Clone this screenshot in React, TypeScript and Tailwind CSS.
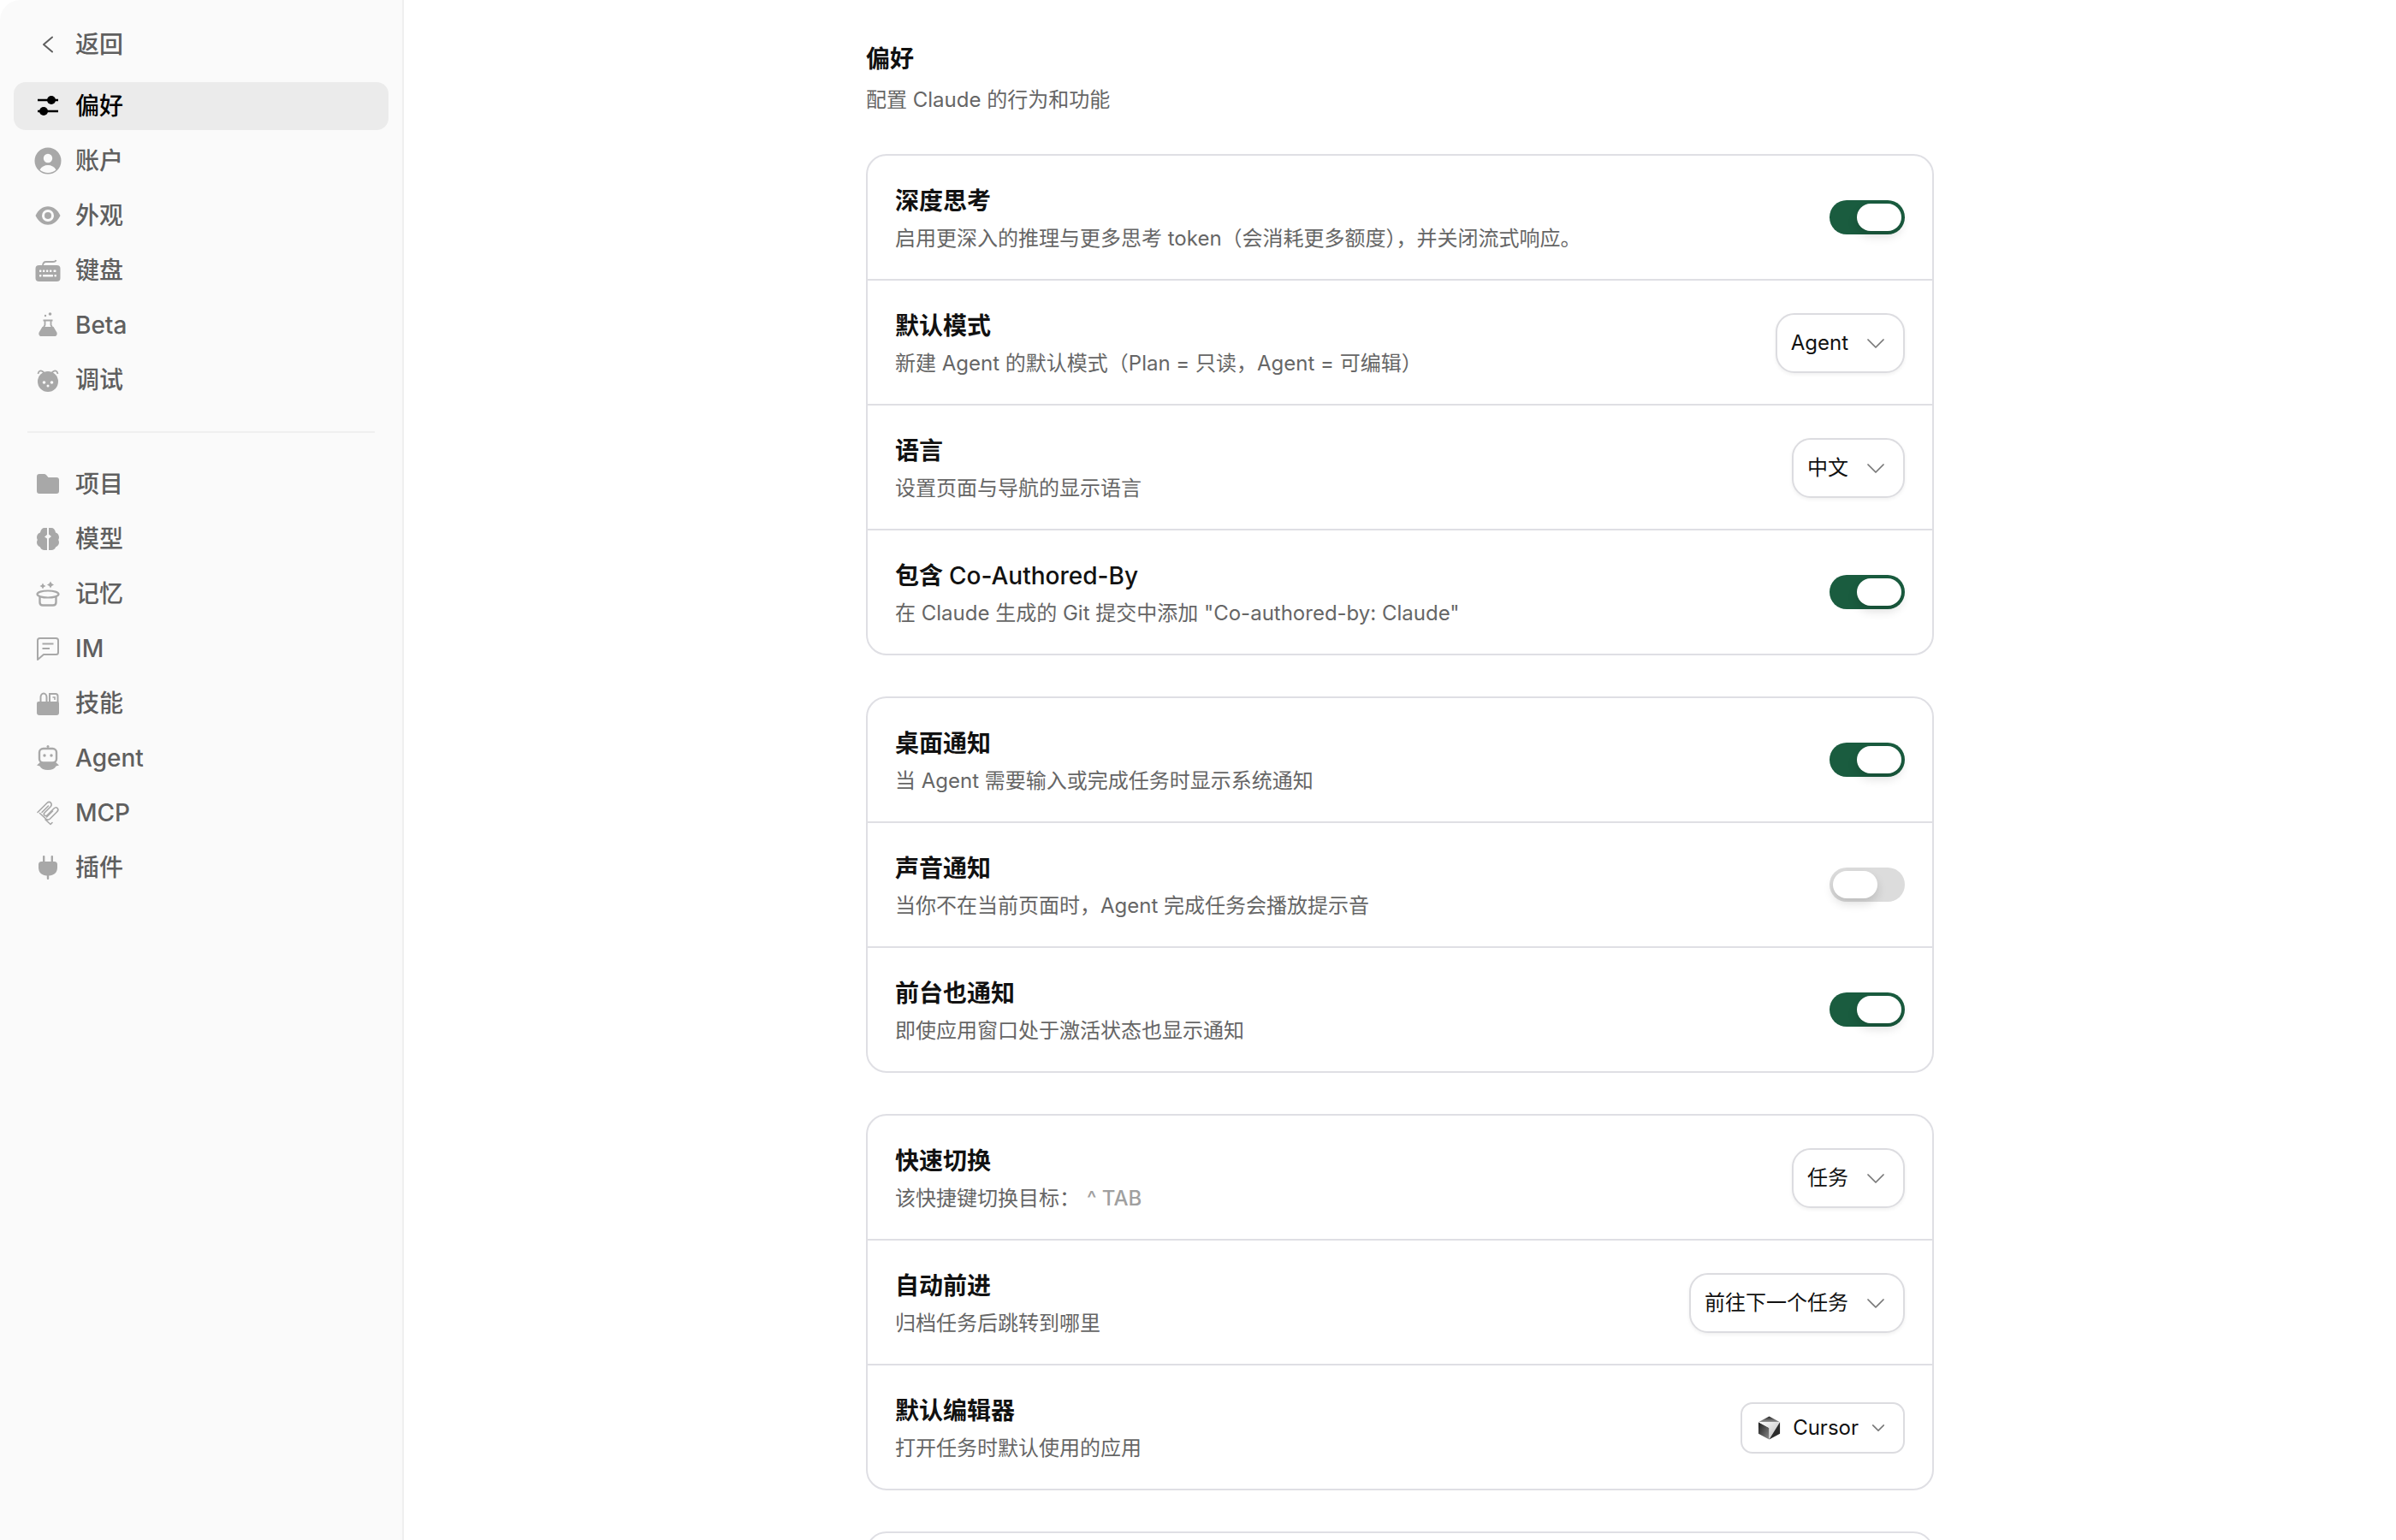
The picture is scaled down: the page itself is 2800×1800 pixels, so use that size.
import type { ReactNode } from "react";

const gray = "#a8a8a8";

function SlidersIcon() {
  return (
    <svg width="32" height="32" viewBox="0 0 32 32" fill="currentColor">
      <path d="M4 9h24M4 22h24" stroke="currentColor" strokeWidth="2.4" />
      <circle cx="20" cy="9" r="5" />
      <circle cx="11" cy="22" r="5" />
    </svg>
  );
}

function AccountIcon() {
  return (
    <svg width="32" height="32" viewBox="0 0 32 32" fill={gray}>
      <circle cx="16" cy="16" r="15.5" />
      <circle cx="16" cy="13" r="5.2" fill="#fafafa" />
      <path d="M6.5 26.5c2-3.6 5.500-5.500 9.500-5.500s7.500 1.900 9.500 5.500c-2.500 2.300-5.800 3.500-9.500 3.500s-7-1.200-9.500-3.500z" fill="#fafafa" />
    </svg>
  );
}

function EyeIcon() {
  return (
    <svg width="32" height="32" viewBox="0 0 32 32" fill={gray}>
      <path d="M1.500 16C5 8.800 10 5.300 16 5.300S27 8.800 30.500 16C27 23.200 22 26.700 16 26.700S5 23.200 1.500 16z" />
      <circle cx="16" cy="16" r="7" fill="#fafafa" />
      <circle cx="16" cy="16" r="4" />
    </svg>
  );
}

function KeyboardIcon() {
  return (
    <svg width="32" height="32" viewBox="0 0 32 32" fill={gray}>
      <rect x="1.500" y="10" width="29" height="19" rx="4" />
      <path d="M10 11c0-3.500 1.500-5 4-5h8c2 0 3-.5 3.500-2" fill="none" stroke={gray} strokeWidth="1.800" />
      <g fill="#fafafa">
        <rect x="6" y="15.500" width="2.400" height="2.400" rx=".6" />
        <rect x="10" y="15.500" width="2.400" height="2.400" rx=".6" />
        <rect x="14" y="15.500" width="2.400" height="2.400" rx=".6" />
        <rect x="18" y="15.500" width="2.400" height="2.400" rx=".6" />
        <rect x="22.500" y="15.500" width="3" height="2.400" rx=".6" />
        <rect x="6" y="21" width="2.400" height="2.400" rx=".6" />
        <rect x="10" y="21" width="12" height="2.400" rx=".6" />
        <rect x="23.500" y="21" width="2.400" height="2.400" rx=".6" />
      </g>
    </svg>
  );
}

function FlaskIcon() {
  return (
    <svg width="32" height="32" viewBox="0 0 32 32" fill={gray}>
      <circle cx="18.500" cy="3" r="1.800" />
      <circle cx="13" cy="5" r="1.200" />
      <path d="M10.500 10.500h11M12.500 10.500v5.500L7 25M19.500 10.500v5.500L25 25" fill="none" stroke={gray} strokeWidth="1.800" />
      <path d="M9.500 18h13l3.700 6.200c1.300 2.400-.2 4.800-2.400 4.800H8.200c-2.200 0-3.700-2.400-2.400-4.800z" />
    </svg>
  );
}

function BugIcon() {
  return (
    <svg width="32" height="32" viewBox="0 0 32 32" fill={gray}>
      <circle cx="16" cy="18" r="12" />
      <path d="M4.500 9C5 6 7 4.500 9.500 6l2.500 2M27.500 9C27 6 25 4.500 22.500 6L20 8" fill="none" stroke={gray} strokeWidth="1.800" />
      <circle cx="11.500" cy="19" r="1.800" fill="#fafafa" />
      <circle cx="20.500" cy="19" r="1.800" fill="#fafafa" />
      <circle cx="16" cy="23" r="1.500" fill="#fafafa" />
    </svg>
  );
}

function FolderIcon() {
  return (
    <svg width="32" height="32" viewBox="0 0 32 32" fill={gray}>
      <path d="M3 7a3 3 0 0 1 3-3h5.500c1 0 1.800.4 2.400 1.100L16.500 8H26a3 3 0 0 1 3 3v13a3 3 0 0 1-3 3H6a3 3 0 0 1-3-3z" />
    </svg>
  );
}

function BrainIcon() {
  return (
    <svg width="32" height="32" viewBox="0 0 32 32" fill={gray}>
      <path d="M15 3v8l-3 2.500 3 2V29h-3c-2.500 0-4.500-1.500-5-3.500C4.500 24.500 3 22.300 3 20c0-1 .3-2 .8-3C3.300 16 3 15 3 14c0-2.500 1.500-4.700 4-5.500C7.500 5 9.500 3 12 3z" />
      <path d="M17 3v7.500l3 2.500-3 2.500V29h3c2.500 0 4.500-1.500 5-3.500 2.500-1 4-3.200 4-5.500 0-1-.3-2-.8-3 .5-1 .8-2 .8-3 0-2.500-1.500-4.700-4-5.500C24.500 5 22.500 3 20 3z" />
    </svg>
  );
}

function PotIcon() {
  return (
    <svg width="32" height="32" viewBox="0 0 32 32" fill={gray}>
      <path d="M10 2.500l1.200 2.300 2.300 1.200-2.300 1.200L10 9.500 8.800 7.200 6.500 6l2.300-1.200zM19 .5l1.400 2.600L23 4.500l-2.600 1.400L19 8.500l-1.400-2.600L15 4.500l2.600-1.400z" transform="translate(0 1)" />
      <ellipse cx="16" cy="16.500" rx="12.500" ry="4" fill="none" stroke={gray} strokeWidth="2.200" />
      <path d="M6.500 19v7c0 2 1.500 3.500 3.500 3.500h12c2 0 3.500-1.500 3.500-3.500v-7" fill="none" stroke={gray} strokeWidth="2.400" />
    </svg>
  );
}

function ChatIcon() {
  return (
    <svg width="32" height="32" viewBox="0 0 32 32" fill="none" stroke={gray} strokeWidth="2">
      <path d="M4 6.500A2.500 2.500 0 0 1 6.500 4h19A2.500 2.500 0 0 1 28 6.500v14a2.500 2.500 0 0 1-2.500 2.500H11l-7 6z" strokeLinejoin="round" />
      <path d="M9.500 10.500h13M9.500 16h8.500" />
    </svg>
  );
}

function SkillsIcon() {
  return (
    <svg width="32" height="32" viewBox="0 0 32 32" fill={gray}>
      <path d="M3 16a2 2 0 0 1 2-2h22a2 2 0 0 1 2 2v11a3 3 0 0 1-3 3H6a3 3 0 0 1-3-3z" />
      <path d="M7.500 15V9c0-2.500 1.500-4.500 3.500-4.500S14.500 6.500 14.500 9v6M18 15V5h7c1.500 0 2.500 1 2.500 2.500V15" fill="none" stroke={gray} strokeWidth="2" />
      <path d="M21.500 9h2.500v3" fill="none" stroke={gray} strokeWidth="1.600" />
    </svg>
  );
}

function RobotIcon() {
  return (
    <svg width="32" height="32" viewBox="0 0 32 32" fill={gray}>
      <circle cx="16" cy="2.500" r="1.500" />
      <path d="M8 20h16l5 4.500-3.500 1C24 28.500 20.500 30 16 30s-8-1.500-9.500-4.500L3 24.500z" />
      <rect x="6" y="5" width="20" height="16.500" rx="4.500" fill="#fafafa" stroke={gray} strokeWidth="2.400" />
      <circle cx="12" cy="13" r="1.700" />
      <circle cx="20" cy="13" r="1.700" />
    </svg>
  );
}

function ClipIcon() {
  return (
    <svg width="32" height="32" viewBox="0 0 32 32" fill="none" stroke={gray} strokeWidth="1.600" strokeLinejoin="round" strokeLinecap="round">
      <path d="M4 15.500L15 4.500c1.500-1.500 3.500-1.500 4.500 0s1 3-.5 4.500l-7 7c-1 1-1 2 0 3s2 1 3 0l8-8c1.500-1.500 3-1.500 4-.5s1 3-.5 4.500l-8 8c-1.500 1.500-3 1.500-4.500.5L6.500 16.500" />
      <path d="M9 15.500l7.500-7.500M14.500 21l7-7" />
      <path d="M13 24l6 5.500 2-2" />
    </svg>
  );
}

function PlugIcon() {
  return (
    <svg width="32" height="32" viewBox="0 0 32 32" fill={gray}>
      <rect x="10" y="2" width="2.400" height="9" rx="1" />
      <rect x="19.600" y="2" width="2.400" height="9" rx="1" />
      <path d="M8.500 9h15A3.500 3.500 0 0 1 27 12.500V16c0 5.500-3.500 9-9.500 9.500H14.500C8.500 25 5 21.500 5 16v-3.500A3.500 3.500 0 0 1 8.500 9z" />
      <rect x="14.800" y="24" width="2.400" height="6" rx="1" />
    </svg>
  );
}

function BackChevron() {
  return (
    <svg width="14" height="20" viewBox="0 0 14 20" fill="none" stroke="currentColor" strokeWidth="2" strokeLinecap="round" strokeLinejoin="round">
      <path d="M12 1.500L2 10l10 8.500" />
    </svg>
  );
}

function SelectChevron({ small }: { small?: boolean }) {
  return (
    <svg width={small ? 14 : 20} height={small ? 8 : 11} viewBox="0 0 20 11" fill="none" stroke="#777" strokeWidth={small ? 2.200 : 1.700} strokeLinecap="round" strokeLinejoin="round">
      <path d="M1 1l9 9 9-9" />
    </svg>
  );
}

function CursorLogo() {
  return (
    <svg width="27" height="30" viewBox="0 0 28 30">
      <defs>
        <linearGradient id="left" x1="0" y1="0" x2="1" y2="1">
          <stop offset="0" stopColor="#1c1c1c" />
          <stop offset="1" stopColor="#8a8a8a" />
        </linearGradient>
        <linearGradient id="top" x1="0.500" y1="0" x2="0.500" y2="1">
          <stop offset="0" stopColor="#222" />
          <stop offset="1" stopColor="#9a9a9a" />
        </linearGradient>
        <linearGradient id="wedge" x1="0" y1="0" x2="1" y2="1">
          <stop offset="0" stopColor="#ffffff" />
          <stop offset="1" stopColor="#b8b8b8" />
        </linearGradient>
      </defs>
      <polygon points="14,1 27,8 14,8 1,8" fill="url(#top)" />
      <polygon points="1,8 14,15 14,29 1,22" fill="url(#left)" />
      <polygon points="27,8 27,22 14,29 19,15" fill="#2b2b2b" />
      <polygon points="1,8 27,8 14,29 14,15" fill="url(#wedge)" />
    </svg>
  );
}

type NavItem = { label: string; icon: ReactNode; active?: boolean };

const topNav: NavItem[] = [
  { label: "偏好", icon: <SlidersIcon />, active: true },
  { label: "账户", icon: <AccountIcon /> },
  { label: "外观", icon: <EyeIcon /> },
  { label: "键盘", icon: <KeyboardIcon /> },
  { label: "Beta", icon: <FlaskIcon /> },
  { label: "调试", icon: <BugIcon /> },
];

const bottomNav: NavItem[] = [
  { label: "项目", icon: <FolderIcon /> },
  { label: "模型", icon: <BrainIcon /> },
  { label: "记忆", icon: <PotIcon /> },
  { label: "IM", icon: <ChatIcon /> },
  { label: "技能", icon: <SkillsIcon /> },
  { label: "Agent", icon: <RobotIcon /> },
  { label: "MCP", icon: <ClipIcon /> },
  { label: "插件", icon: <PlugIcon /> },
];

function NavRow({ item }: { item: NavItem }) {
  return (
    <div
      className={
        item.active
          ? "flex h-14 items-center gap-4 rounded-[14px] bg-[#ebebeb] pl-6 font-medium text-black"
          : "flex h-14 items-center gap-4 rounded-[14px] pl-6 font-medium text-[#5f5f5f]"
      }
    >
      <span className="flex w-8 justify-center">{item.icon}</span>
      <span className="text-[28px] leading-8">{item.label}</span>
    </div>
  );
}

function Sidebar() {
  return (
    <aside className="h-full w-[472px] shrink-0 rounded-tl-3xl border-r-2 border-[#efefef] bg-[#fafafa] px-4 pt-6">
      <div className="flex h-14 items-center gap-4 pl-6 font-medium text-[#5f5f5f]">
        <span className="flex w-8 justify-center">
          <BackChevron />
        </span>
        <span className="text-[28px] leading-8">返回</span>
      </div>
      <nav className="mt-4 flex flex-col gap-2">
        {topNav.map((item) => (
          <NavRow key={item.label} item={item} />
        ))}
      </nav>
      <div className="mx-4 mt-8 mb-8 h-0.5 bg-[#efefef]" />
      <nav className="flex flex-col gap-2">
        {bottomNav.map((item) => (
          <NavRow key={item.label} item={item} />
        ))}
      </nav>
    </aside>
  );
}

function Toggle({ on = true }: { on?: boolean }) {
  return (
    <div className={on ? "flex h-10 w-[88px] items-center justify-end rounded-full bg-[#1a5c3f] p-1" : "flex h-10 w-[88px] items-center rounded-full bg-[#dcdcdc] p-1"}>
      <div className="h-8 w-[52px] rounded-full bg-white shadow-[0_6px_12px_rgba(0,0,0,0.14)]" />
    </div>
  );
}

function Select({ value }: { value: string }) {
  return (
    <div className="mt-0.5 flex h-[70px] items-center gap-[22px] rounded-[22px] border-2 border-[#dcdce0] bg-white pr-[22px] pl-4 text-[24px] text-[#111] shadow-[0_2px_4px_rgba(0,0,0,0.06)]">
      <span>{value}</span>
      <SelectChevron />
    </div>
  );
}

function EditorSelect() {
  return (
    <div className="mt-0.5 flex h-[60px] items-center rounded-[14px] border-2 border-[#dcdce0] bg-white pr-[22px] pl-[18px] text-[24px] text-[#111]">
      <CursorLogo />
      <span className="ml-[14px]">Cursor</span>
      <span className="ml-4">
        <SelectChevron small />
      </span>
    </div>
  );
}

function Row({ title, desc, children, last }: { title: ReactNode; desc: ReactNode; children: ReactNode; last?: boolean }) {
  return (
    <div className={last ? "flex h-[144px] items-center justify-between px-8" : "flex h-[146px] items-center justify-between border-b-2 border-[#dfdfe4] px-8"}>
      <div className="pt-1.5">
        <div className="text-[28px] leading-10 font-semibold text-[#111]">{title}</div>
        <div className="mt-1 text-[24px] leading-10 text-[#666]">{desc}</div>
      </div>
      {children}
    </div>
  );
}

function Card({ children }: { children: ReactNode }) {
  return <div className="rounded-3xl border-2 border-[#dfdfe4] bg-white">{children}</div>;
}

export default function App() {
  return (
    <div className="flex h-[1800px] overflow-hidden bg-white font-['Inter','Noto_Sans_CJK_SC',sans-serif]">
      <Sidebar />
      <main className="flex-1 overflow-hidden">
        <div className="mx-auto w-[1248px] pt-[49px]">
          <h1 className="text-[28px] leading-10 font-bold text-[#111]">偏好</h1>
          <p className="mt-2.5 text-[24px] leading-9 text-[#666]">配置 Claude 的行为和功能</p>
          <div className="mt-[45px] flex flex-col gap-12">
            <Card>
              <Row title="深度思考" desc="启用更深入的推理与更多思考 token（会消耗更多额度），并关闭流式响应。">
                <Toggle />
              </Row>
              <Row title="默认模式" desc="新建 Agent 的默认模式（Plan = 只读，Agent = 可编辑）">
                <Select value="Agent" />
              </Row>
              <Row title="语言" desc="设置页面与导航的显示语言">
                <Select value="中文" />
              </Row>
              <Row
                title={
                  <>
                    包含 <span className="font-medium">Co-Authored-By</span>
                  </>
                }
                desc={'在 Claude 生成的 Git 提交中添加 "Co-authored-by: Claude"'}
                last
              >
                <Toggle />
              </Row>
            </Card>
            <Card>
              <Row title="桌面通知" desc="当 Agent 需要输入或完成任务时显示系统通知">
                <Toggle />
              </Row>
              <Row title="声音通知" desc="当你不在当前页面时，Agent 完成任务会播放提示音">
                <Toggle on={false} />
              </Row>
              <Row title="前台也通知" desc="即使应用窗口处于激活状态也显示通知" last>
                <Toggle />
              </Row>
            </Card>
            <Card>
              <Row
                title="快速切换"
                desc={
                  <>
                    该快捷键切换目标：<span className="ml-2 font-medium text-[#a0a0a0]">^ TAB</span>
                  </>
                }
              >
                <Select value="任务" />
              </Row>
              <Row title="自动前进" desc="归档任务后跳转到哪里">
                <Select value="前往下一个任务" />
              </Row>
              <Row title="默认编辑器" desc="打开任务时默认使用的应用" last>
                <EditorSelect />
              </Row>
            </Card>
            <Card>
              <div className="h-40" />
            </Card>
          </div>
        </div>
      </main>
    </div>
  );
}
